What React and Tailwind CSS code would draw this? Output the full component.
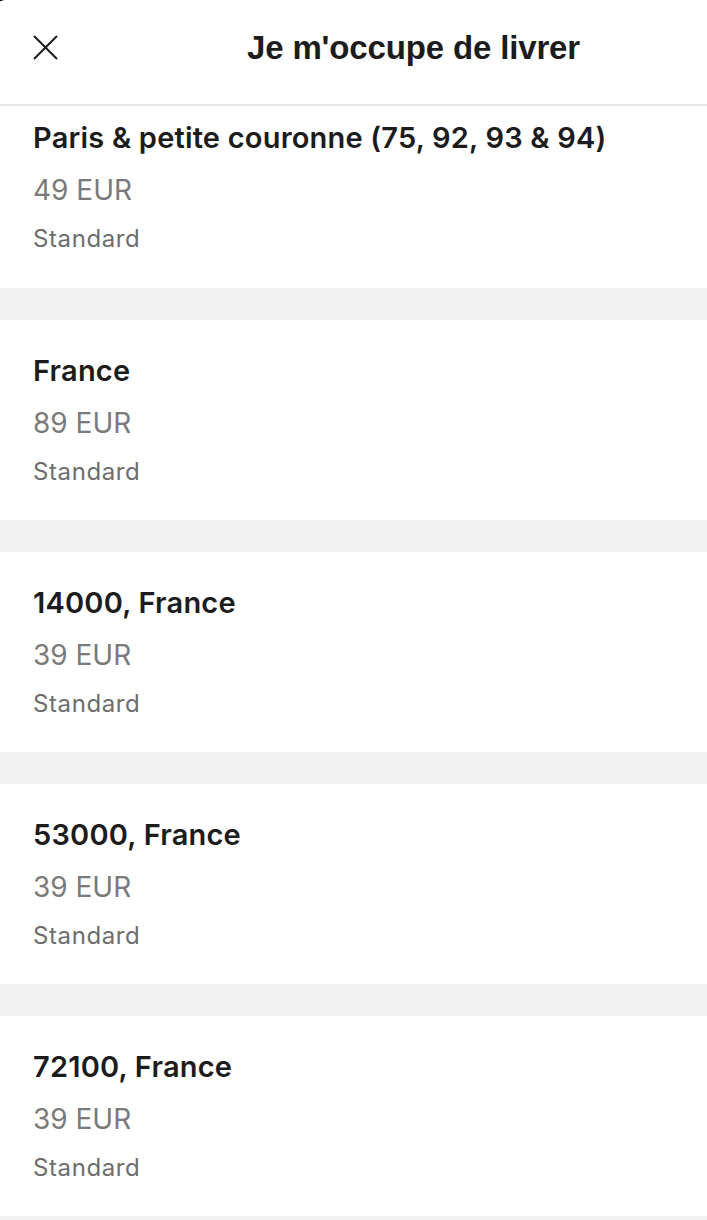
import React from "react";

const items = [
  { title: "Paris & petite couronne (75, 92, 93 & 94)", price: "49 EUR" },
  { title: "France", price: "89 EUR" },
  { title: "14000, France", price: "39 EUR" },
  { title: "53000, France", price: "39 EUR" },
  { title: "72100, France", price: "39 EUR" },
];

function Row({ title, price, first }) {
  return (
    <div
      className={
        "bg-white px-[33px] " + (first ? "h-[182px] pt-[12px]" : "h-[200px] pt-[31px]")
      }
    >
      <div className="h-[40px] leading-[40px] text-[29px] font-semibold text-[#1c1c1c] tracking-[0.2px] whitespace-nowrap">
        {title}
      </div>
      <div className="mt-[12px] h-[40px] leading-[40px] text-[28px] font-normal text-[#7a7a7a]">
        {price}
      </div>
      <div className="mt-[9px] h-[40px] leading-[40px] text-[24px] font-normal text-[#6d6d6d] tracking-[0.6px]">
        Standard
      </div>
    </div>
  );
}

export default function App() {
  return (
    <div className="w-[707px] h-[1220px] overflow-hidden bg-black" style={{ fontFamily: "Inter, 'Noto Sans', sans-serif" }}>
      <div className="-ml-[6px] w-[713px] h-[1220px] bg-[#f2f2f2] rounded-tl-[12px] overflow-hidden">
        <div className="pl-[6px]">
          <header className="h-[106px] bg-white border-b-2 border-[#e8e8e8] flex items-center">
            <button className="w-[120px] h-full flex items-center pl-[33px] -mt-[9px]">
              <svg width="25" height="25" viewBox="0 0 25 25" fill="none" stroke="#1c1c1c" strokeWidth="2">
                <path d="M1 1L24 24M24 1L1 24" />
              </svg>
            </button>
            <h1
              className="flex-1 text-center text-[33px] font-bold text-[#1c1c1c] tracking-[-0.15px] -mt-[9px]"
              style={{ fontFamily: "'Liberation Sans', Arial, sans-serif" }}
            >
              Je m'occupe de livrer
            </h1>
          </header>
          <div className="flex flex-col gap-[32px]">
            {items.map((it, i) => (
              <Row key={i} {...it} first={i === 0} />
            ))}
          </div>
        </div>
      </div>
    </div>
  );
}
